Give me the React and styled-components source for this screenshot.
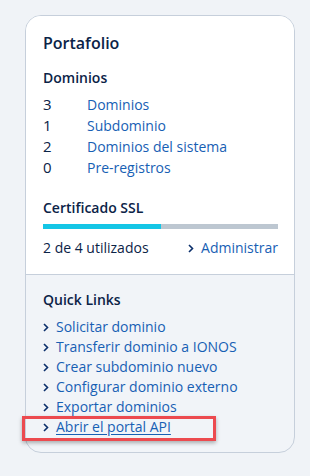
import styled, { createGlobalStyle } from 'styled-components';

const GlobalStyle = createGlobalStyle`
  html, body {
    margin: 0;
    padding: 0;
    background: #f0f3f7;
    font-family: 'Open Sans', 'Liberation Sans', sans-serif;
    color: #0b2347;
  }
`;

const Page = styled.div`
  width: 310px;
  height: 476px;
  padding: 15px 0 0 25px;
  box-sizing: border-box;
`;

const Card = styled.div`
  width: 270px;
  box-sizing: border-box;
  border: 1px solid #c6cfdb;
  border-radius: 16px;
  background: #f1f4f8;
  overflow: visible;
`;

const TopSection = styled.div`
  background: #fff;
  border-radius: 15px 15px 0 0;
  padding: 16px 16px 16px 17px;
  border-bottom: 1px solid #c6cfdb;
`;

const BottomSection = styled.div`
  padding: 15px 16px 15px 17px;
`;

const Title = styled.h2`
  margin: 0 0 14px;
  font-size: 16px;
  line-height: 22px;
  font-weight: 600;
`;

const Heading = styled.h3`
  margin: 0;
  font-size: 14px;
  line-height: 20px;
  font-weight: 600;
`;

const CountList = styled.div`
  margin: 6px 0 20px;
  display: flex;
  flex-direction: column;
`;

const CountRow = styled.div`
  display: grid;
  grid-template-columns: 44px 1fr;
  line-height: 21px;
  font-size: 14px;
`;

const Count = styled.span`
  font-size: 15px;
  color: #0b2347;
`;

const Link = styled.a`
  color: #1760b4;
  text-decoration: ${(p) => (p.$underline ? 'underline' : 'none')};
  text-underline-offset: 2px;
  cursor: pointer;
`;

const Bar = styled.div`
  margin-top: 6px;
  height: 5px;
  background: #bdc7d1;
  display: flex;
`;

const BarFill = styled.div`
  height: 100%;
  background: #14c6e6;
`;

const UsageRow = styled.div`
  margin-top: 9px;
  display: flex;
  justify-content: space-between;
  align-items: center;
  font-size: 14px;
  line-height: 20px;
`;

const ChevronLink = styled.div`
  position: relative;
  display: flex;
  align-items: center;
  gap: 7px;
  font-size: 14px;
  line-height: 20px;
`;

const LinkList = styled.div`
  margin-top: 7px;
  display: flex;
  flex-direction: column;
`;

const Highlight = styled.span`
  position: absolute;
  left: -21px;
  top: -1px;
  width: 194px;
  height: 25px;
  box-sizing: border-box;
  border: 3px solid #ec4a4f;
  box-shadow: 0 2px 4px rgba(0, 0, 0, 0.3);
  pointer-events: none;
`;

function Chevron() {
  return (
    <svg width="6" height="9" viewBox="0 0 6 9">
      <path d="M1 1l3.5 3.5L1 8" fill="none" stroke="#0b2f6b" strokeWidth="1.6" />
    </svg>
  );
}

const counts = [
  { n: 3, label: 'Dominios' },
  { n: 1, label: 'Subdominio' },
  { n: 2, label: 'Dominios del sistema' },
  { n: 0, label: 'Pre-registros' },
];

const quickLinks = [
  'Solicitar dominio',
  'Transferir dominio a IONOS',
  'Crear subdominio nuevo',
  'Configurar dominio externo',
  'Exportar dominios',
];

export default function App() {
  const used = 2;
  const total = 4;

  return (
    <Page>
      <GlobalStyle />
      <Card>
        <TopSection>
          <Title>Portafolio</Title>
          <Heading>Dominios</Heading>
          <CountList>
            {counts.map((c) => (
              <CountRow key={c.label}>
                <Count>{c.n}</Count>
                <Link>{c.label}</Link>
              </CountRow>
            ))}
          </CountList>
          <Heading>Certificado SSL</Heading>
          <Bar>
            <BarFill style={{ width: `${(used / total) * 100}%` }} />
          </Bar>
          <UsageRow>
            <span>{used} de {total} utilizados</span>
            <ChevronLink>
              <Chevron />
              <Link>Administrar</Link>
            </ChevronLink>
          </UsageRow>
        </TopSection>
        <BottomSection>
          <Heading>Quick Links</Heading>
          <LinkList>
            {quickLinks.map((l) => (
              <ChevronLink key={l}>
                <Chevron />
                <Link>{l}</Link>
              </ChevronLink>
            ))}
            <ChevronLink>
              <Chevron />
              <Link $underline>Abrir el portal API</Link>
              <Highlight />
            </ChevronLink>
          </LinkList>
        </BottomSection>
      </Card>
    </Page>
  );
}
